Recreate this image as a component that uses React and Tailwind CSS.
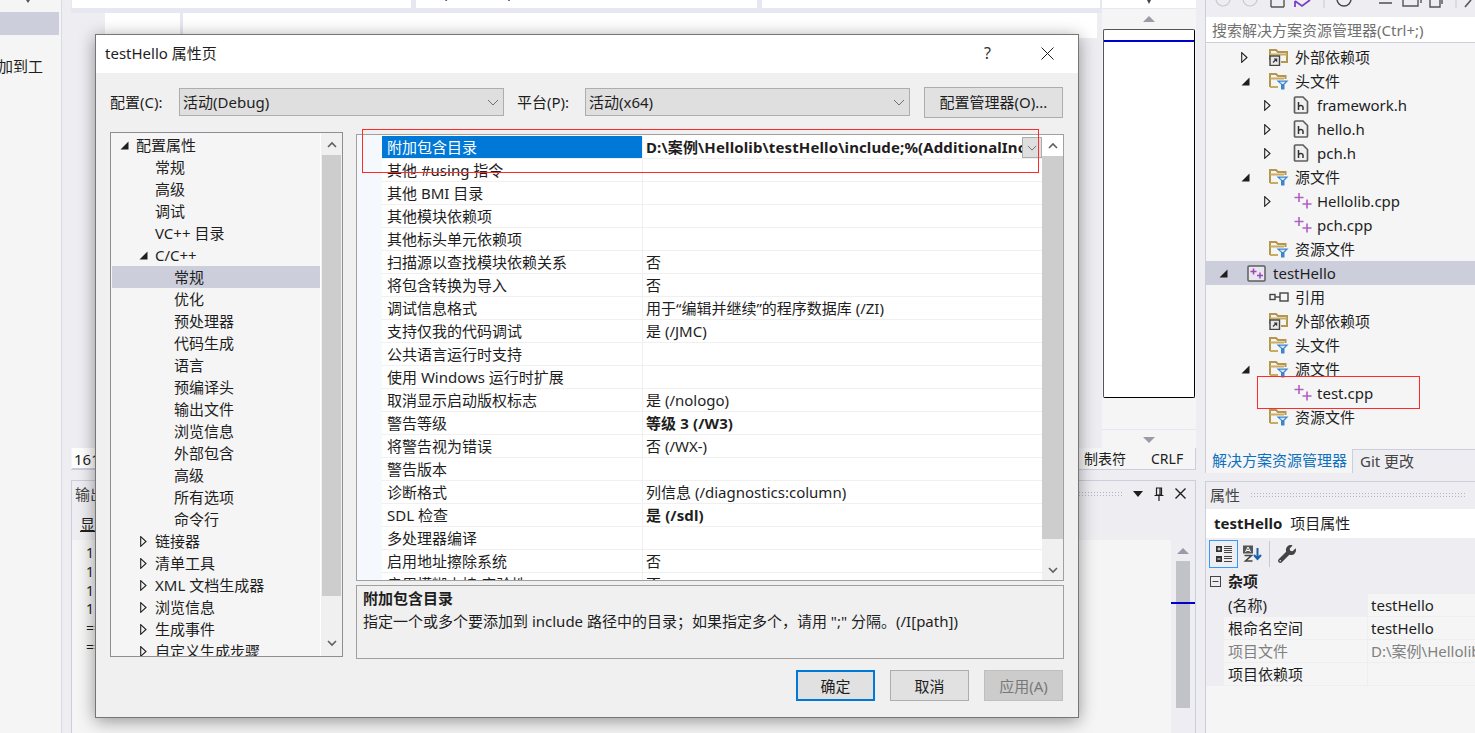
import React from 'react';
import { FaWrench } from 'react-icons/fa';

const Down = ({ c = '#5f5f5f', s = 'w-[12px] h-[7px]' }) => (
  <svg viewBox="0 0 12 7" className={s}><path d="M1 1l5 5 5-5" fill="none" stroke={c} strokeWidth="1" /></svg>
);
const ChevUp = () => (
  <svg viewBox="0 0 10 7" className="w-[10px] h-[7px]"><path d="M1 6l4-4 4 4" fill="none" stroke="#606060" strokeWidth="1.6" /></svg>
);
const ChevDown = () => (
  <svg viewBox="0 0 10 7" className="w-[10px] h-[7px]"><path d="M1 1l4 4 4-4" fill="none" stroke="#606060" strokeWidth="1.6" /></svg>
);
const Open = () => (
  <svg viewBox="0 0 9 9" className="w-[9px] h-[9px]"><polygon points="8.5,0.5 8.5,8.5 0.5,8.5" fill="#1e1e1e" /></svg>
);
const Closed = () => (
  <svg viewBox="0 0 7 11" className="w-[7px] h-[11px]"><polygon points="0.7,0.7 6,5.5 0.7,10.3" fill="none" stroke="#1e1e1e" strokeWidth="1.1" /></svg>
);
const GrayUp = () => (
  <svg viewBox="0 0 12 6" className="w-[12px] h-[6px]"><polygon points="6,0 12,6 0,6" fill="#9a9ba8" /></svg>
);
const GrayDown = () => (
  <svg viewBox="0 0 12 6" className="w-[12px] h-[6px]"><polygon points="0,0 12,0 6,6" fill="#9a9ba8" /></svg>
);

const FolderFilter = () => (
  <svg viewBox="0 0 20 18" className="w-[20px] h-[18px]">
    <path d="M1 15V2h6l2 2h7.5v3" fill="#f5f5f5" stroke="#b4964c" strokeWidth="2" />
    <path d="M1 15h8M1 6.5h14" fill="none" stroke="#c9ab62" strokeWidth="2" />
    <polygon points="7.5,8.5 19.5,8.5 15.5,12.5 15.5,17.5 12,17.5 12,12.5" fill="#3b86cf" />
    <polygon points="10.8,9.8 16.5,9.8 14.3,12 13,12" fill="#d9e9f7" />
  </svg>
);
const FolderLink = () => (
  <svg viewBox="0 0 20 18" className="w-[20px] h-[18px]">
    <path d="M1 12V2h6l2 2h9v10h-6" fill="#f5f5f5" stroke="#b4964c" strokeWidth="2" />
    <path d="M1 6.5h17" fill="none" stroke="#c9ab62" strokeWidth="2" />
    <rect x="1" y="8" width="9.5" height="9.5" fill="#e8e8e8" stroke="#444" strokeWidth="1.4" />
    <path d="M4 14.5l3.5-3.5M5 11h2.7v2.7" fill="none" stroke="#333" strokeWidth="1.1" />
  </svg>
);
const HFile = () => (
  <svg viewBox="0 0 16 18" className="w-[16px] h-[18px]">
    <path d="M1.5 2a1 1 0 0 1 1-1H10l4.5 4.5V16a1 1 0 0 1-1 1h-11a1 1 0 0 1-1-1z" fill="#f0f0f0" stroke="#5e5e5e" strokeWidth="1.7" />
    <path d="M5.5 6v8M5.5 10.5c1-1.4 4.5-1.6 4.5.6V14" fill="none" stroke="#333" strokeWidth="1.5" />
  </svg>
);
const Plus = () => (
  <svg viewBox="0 0 20 18" className="w-[20px] h-[18px]">
    <path d="M6 1v9M1.5 5.5h9M14 7.5v9M9.5 12h9" fill="none" stroke="#b05fc6" strokeWidth="1.6" />
  </svg>
);
const Project = () => (
  <svg viewBox="0 0 19 17" className="w-[19px] h-[17px]">
    <rect x="1" y="1" width="17" height="15" rx="1" fill="#e8e6ee" stroke="#5e5e5e" strokeWidth="1.5" />
    <path d="M6.5 3.5v6M3.5 6.5h6M13 7.5v6M10 10.5h6" fill="none" stroke="#a045b8" strokeWidth="1.5" />
  </svg>
);
const Ref = () => (
  <svg viewBox="0 0 20 10" className="w-[20px] h-[10px]">
    <rect x="1" y="2.5" width="5" height="5" fill="none" stroke="#444" strokeWidth="1.4" />
    <path d="M6 5h5" stroke="#444" strokeWidth="1.4" />
    <rect x="11" y="1" width="8" height="8" fill="none" stroke="#444" strokeWidth="1.4" />
  </svg>
);

const dlgTree = [
  ['配置属性', 'open', 'pl-[8px]', false],
  ['常规', 'none', 'pl-[43px]', false],
  ['高级', 'none', 'pl-[43px]', false],
  ['调试', 'none', 'pl-[43px]', false],
  ['VC++ 目录', 'none', 'pl-[43px]', false],
  ['C/C++', 'open', 'pl-[27px]', false],
  ['常规', 'none', 'pl-[62px]', true],
  ['优化', 'none', 'pl-[62px]', false],
  ['预处理器', 'none', 'pl-[62px]', false],
  ['代码生成', 'none', 'pl-[62px]', false],
  ['语言', 'none', 'pl-[62px]', false],
  ['预编译头', 'none', 'pl-[62px]', false],
  ['输出文件', 'none', 'pl-[62px]', false],
  ['浏览信息', 'none', 'pl-[62px]', false],
  ['外部包含', 'none', 'pl-[62px]', false],
  ['高级', 'none', 'pl-[62px]', false],
  ['所有选项', 'none', 'pl-[62px]', false],
  ['命令行', 'none', 'pl-[62px]', false],
  ['链接器', 'closed', 'pl-[28px]', false],
  ['清单工具', 'closed', 'pl-[28px]', false],
  ['XML 文档生成器', 'closed', 'pl-[28px]', false],
  ['浏览信息', 'closed', 'pl-[28px]', false],
  ['生成事件', 'closed', 'pl-[28px]', false],
  ['自定义生成步骤', 'closed', 'pl-[28px]', false],
];

const props = [
  ['附加包含目录', 'D:\\案例\\Hellolib\\testHello\\include;%(AdditionalIncludeDirectories)', true],
  ['其他 #using 指令', ''],
  ['其他 BMI 目录', ''],
  ['其他模块依赖项', ''],
  ['其他标头单元依赖项', ''],
  ['扫描源以查找模块依赖关系', '否'],
  ['将包含转换为导入', '否'],
  ['调试信息格式', '用于“编辑并继续”的程序数据库 (/ZI)'],
  ['支持仅我的代码调试', '是 (/JMC)'],
  ['公共语言运行时支持', ''],
  ['使用 Windows 运行时扩展', ''],
  ['取消显示启动版权标志', '是 (/nologo)'],
  ['警告等级', '等级 3 (/W3)', true],
  ['将警告视为错误', '否 (/WX-)'],
  ['警告版本', ''],
  ['诊断格式', '列信息 (/diagnostics:column)'],
  ['SDL 检查', '是 (/sdl)', true],
  ['多处理器编译', ''],
  ['启用地址擦除系统', '否'],
  ['启用模糊支持(实验性)', '否'],
];

const slnRows = [
  ['外部依赖项', 'closed', 'folderlink', 'l1'],
  ['头文件', 'open', 'filter', 'l1'],
  ['framework.h', 'closed', 'h', 'l2'],
  ['hello.h', 'closed', 'h', 'l2'],
  ['pch.h', 'closed', 'h', 'l2'],
  ['源文件', 'open', 'filter', 'l1'],
  ['Hellolib.cpp', 'closed', 'plus', 'l2'],
  ['pch.cpp', 'none', 'plus', 'l2'],
  ['资源文件', 'none', 'filter', 'l1'],
  ['testHello', 'open', 'project', 'l0'],
  ['引用', 'none', 'ref', 'l1'],
  ['外部依赖项', 'none', 'folderlink', 'l1'],
  ['头文件', 'none', 'filter', 'l1'],
  ['源文件', 'open', 'filter', 'l1'],
  ['test.cpp', 'none', 'plus', 'l2'],
  ['资源文件', 'none', 'filter', 'l1'],
];

const icons = {
  folderlink: <FolderLink />, filter: <FolderFilter />, h: <HFile />, plus: <Plus />, project: <Project />, ref: <Ref />,
};

function SlnRow({ r }) {
  const [text, arrow, icon, lvl] = r;
  const pad = lvl === 'l0' ? 'pl-[13px]' : lvl === 'l1' ? 'pl-[35px]' : 'pl-[58px]';
  const gap = lvl === 'l2' ? 'w-[29px]' : 'w-[28px]';
  const iconW = lvl === 'l2' ? 'w-[24px]' : 'w-[26px]';
  return (
    <div className={`flex items-center h-[24px] ${pad} ${lvl === 'l0' ? 'bg-[#cccedb]' : ''}`}>
      <span className={`${gap} flex items-center shrink-0`}>
        {arrow === 'open' ? <Open /> : arrow === 'closed' ? <Closed /> : null}
      </span>
      <span className={`${iconW} flex items-center shrink-0`}>{icons[icon]}</span>
      <span className="whitespace-nowrap">{text}</span>
    </div>
  );
}

function Select({ w, text }) {
  return (
    <div className={`${w} h-[28px] bg-[#dfdfdf] border border-[#adadad] flex items-center justify-between pl-[3px] pr-[4px]`}>
      <span>{text}</span>
      <Down c="#707070" />
    </div>
  );
}

function Btn({ w, children, cls }) {
  return <div className={`${w} flex items-center justify-center ${cls}`}>{children}</div>;
}

function Grip({ cls }) {
  return <div className={`h-[5px] bg-[radial-gradient(#b4b5c0_0.8px,transparent_0.9px)] bg-[length:3px_3px] ${cls}`} />;
}

export default function App() {
  return (
    <div
      className="relative w-[1475px] h-[733px] overflow-hidden flex bg-[#eeeef2] text-[15px] leading-[22px] text-[#1e1e1e]"
      style={{ fontFamily: '"Noto Sans", "Noto Sans CJK SC", sans-serif' }}
    >
      {/* left tool strip */}
      <div className="w-[62px] shrink-0 bg-[#f5f5f5] border-r border-[#d9dae6] overflow-hidden">
        <div className="h-[12px] pl-[24px]">
          <svg viewBox="0 0 8 3" className="w-[8px] h-[3px]"><polygon points="2,0 6,0 4,3" fill="#555" /></svg>
        </div>
        <div className="h-[23px] w-[59px] bg-[#cccedb]" />
        <div className="mt-[20px] h-[22px] -ml-[17px] whitespace-nowrap">添加到工</div>
      </div>
      <div className="w-[9px] shrink-0" />

      {/* centre */}
      <div className="w-[1125px] shrink-0 flex flex-col">
        <div className="h-[449px] flex bg-[#e6e7f0]">
          <div className="w-[1031px] flex flex-col">
            <div className="h-[8px] flex gap-[5px] pl-[1px]">
              <div className="w-[339px] bg-white overflow-hidden"><div className="-mt-[19px] pl-[25px] whitespace-nowrap">testHello</div></div>
              <div className="w-[341px] bg-white overflow-hidden"><div className="-mt-[19px] pl-[27px] whitespace-nowrap">(全局范围)</div></div>
              <div className="w-[338px] bg-white" />
            </div>
            <div className="h-[5px]" />
            <div className="flex-1 flex bg-[#eeeef2]">
              <div className="w-[34px]" />
              <div className="w-[75px] bg-white" />
              <div className="w-[3px] bg-[#e6e7f0]" />
              <div className="w-[914px] h-[25px] mb-auto bg-white" />
            </div>
          </div>
          <div className="w-[94px] flex flex-col items-center bg-[#f5f5f5]">
            <div className="w-full h-[9px] bg-white border-b border-[#e6e7f0] flex justify-center">
              <svg viewBox="0 0 8 4" className="w-[8px] h-[4px]"><polygon points="2,0 6,0 4,4" fill="#444" /></svg>
            </div>
            <div className="h-[20px] flex items-center"><GrayUp /></div>
            <div className="w-[92px] h-[370px] bg-white border border-[#555] border-r-black border-b-black rounded-[2px]">
              <div className="mt-[10px] h-[2px] bg-[#0000cd]" />
            </div>
            <div className="h-[31px]" />
            <div className="w-full h-[20px] flex items-center justify-center border-t border-[#e6e7f0]"><GrayDown /></div>
          </div>
        </div>
        {/* status */}
        <div className="h-[22px] flex justify-between bg-[#f5f5f5] border-b border-r border-[#cccedb] -mt-[1px] text-[14px]">
          <div className="ml-[1px] h-[21px] w-[40px] pl-[2px] bg-white border-b border-[#cccedb] text-[15px]">161</div>
          <div className="flex">
            <span className="w-[67px]">制表符</span>
            <span className="w-[44px]">CRLF</span>
          </div>
        </div>
        <div className="h-[10px]" />
        {/* output */}
        <div className="flex-1 flex flex-col border border-[#cccedb] border-b-0">
          <div className="h-[29px] flex items-center pl-[3px] pr-[9px] pb-[4px] gap-[10px]">
            <span className="text-[#444]">输出</span>
            <Grip cls="flex-1" />
            <div className="flex items-center gap-[11px]">
              <svg viewBox="0 0 10 6" className="w-[10px] h-[6px]"><polygon points="0,0 10,0 5,6" fill="#1e1e1e" /></svg>
              <svg viewBox="0 0 10 14" className="w-[10px] h-[14px]"><path d="M2.5 1h5v7h-5zM0.5 8.5h9M5 9v5M6 1.5v6" fill="none" stroke="#1e1e1e" strokeWidth="1.2" /></svg>
              <svg viewBox="0 0 11 11" className="w-[11px] h-[11px]"><path d="M0.5 0.5l10 10M10.5 0.5l-10 10" stroke="#1e1e1e" strokeWidth="1.4" /></svg>
            </div>
          </div>
          <div className="h-[30px] pl-[8px] pb-[3px] flex items-center"><span className="underline">显</span><span>示输出来源(S):</span></div>
          <div className="flex-1 flex">
            <div className="flex-1 bg-[#f5f5f5] pl-[14px] text-[14px] leading-[18.8px] pt-[4px]">
              <div>1</div>
              <div>1</div>
              <div>1</div>
              <div>1</div>
              <div>==</div>
              <div>==</div>
            </div>
            <div className="w-[24px] flex flex-col items-center pt-[8px] relative">
              <GrayUp />
              <div className="mt-[7px] w-[14px] h-[147px] bg-[#c2c3c9]" />
              <div className="absolute left-0 right-0 top-[62px] h-[2px] bg-[#0000cd]" />
            </div>
          </div>
        </div>
      </div>
      <div className="w-[9px] shrink-0" />

      {/* right */}
      <div className="flex-1 min-w-0 flex flex-col">
        <div className="h-[473px] flex flex-col bg-[#f5f5f5] border-l border-[#cccedb]">
          <div className="h-[17px] bg-[#eeeef2] overflow-hidden">
            <svg viewBox="0 0 269 17" className="w-[269px] h-[17px]">
              <circle cx="17" cy="-1" r="7" fill="none" stroke="#c8c8cc" strokeWidth="1.2" />
              <circle cx="44" cy="-1" r="7" fill="none" stroke="#c8c8cc" strokeWidth="1.2" />
              <path d="M65 7V0M78 7V0M65 7h13" fill="none" stroke="#555" strokeWidth="1.4" />
              <path d="M89 1l7 5 8-6M89 7V1" fill="none" stroke="#7b3fc4" strokeWidth="1.8" />
              <path d="M118 0v8" stroke="#c8c8d0" />
              <circle cx="138" cy="-1" r="7" fill="none" stroke="#444" strokeWidth="1.4" />
              <path d="M173 3h13" stroke="#444" strokeWidth="1.4" />
              <path d="M197 0v6h15V0M215 0v3" fill="none" stroke="#555" strokeWidth="1.4" />
              <path d="M224 0v7h10V0M236 0v4" fill="none" stroke="#555" strokeWidth="1.4" />
              <path d="M250 0v8" stroke="#c8c8d0" />
              <path d="M259 7l6-7" stroke="#555" strokeWidth="1.6" />
            </svg>
          </div>
          <div className="h-[26px] bg-white border-b border-[#cccedb] pl-[6px] flex items-center text-[#717171]">搜索解决方案资源管理器(Ctrl+;)</div>
          <div className="h-[2px]" />
          <div className="flex-1 flex flex-col">
            {slnRows.map((r, i) => <SlnRow key={i} r={r} />)}
          </div>
          <div className="h-[24px] flex bg-[#eeeef2]">
            <div className="w-[147px] bg-[#f5f5f5] pl-[6px] text-[#0e70c0] border-r border-[#cccedb] shrink-0">解决方案资源管理器</div>
            <div className="flex-1 pl-[7px] text-[#444] border-t border-[#cccedb]">Git 更改</div>
          </div>
        </div>
        <div className="h-[8px]" />
        {/* properties */}
        <div className="flex-1 flex flex-col border-l border-t border-[#cccedb] bg-[#f5f5f5]">
          <div className="h-[27px] flex items-center pl-[4px] pb-[2px] bg-[#eeeef2] gap-[10px]">
            <span className="text-[#444]">属性</span>
            <Grip cls="w-[216px]" />
          </div>
          <div className="h-[29px] bg-white flex items-center pl-[8px] pb-[2px] gap-[8px]">
            <span className="font-bold">testHello</span>
            <span>项目属性</span>
          </div>
          <div className="h-[32px] bg-[#eeeef2] flex items-center pl-[3px]">
            <div className="w-[29px] h-[28px] border border-[#3399ff] flex items-center justify-center">
              <svg viewBox="0 0 18 18" className="w-[18px] h-[18px]">
                <rect x="1" y="1" width="6" height="6" fill="#333" /><rect x="1" y="11" width="6" height="6" fill="#333" />
                <path d="M2.5 4h3M4 2.5v3M2.5 14h3" stroke="#fff" strokeWidth="1" />
                <path d="M9 1.5h8M9 3.5h8M9 5.5h8M9 7.5h8M9 11.5h8M9 13.5h8M9 16.5h8" stroke="#444" strokeWidth="1" />
              </svg>
            </div>
            <div className="w-[28px] flex items-center justify-center">
              <svg viewBox="0 0 20 18" className="w-[20px] h-[18px]">
                <rect x="1" y="0.5" width="10" height="8" fill="#555" />
                <path d="M3.5 7l2.5-5 2.5 5M4.5 5.5h3" fill="none" stroke="#fff" strokeWidth="1" />
                <path d="M2.5 10.5h7l-6 5.5h7" fill="none" stroke="#444" strokeWidth="1.6" />
                <path d="M15.5 3v11M12 10l3.5 4 3.5-4" fill="none" stroke="#1a5fa8" strokeWidth="2" />
              </svg>
            </div>
            <div className="w-px h-[26px] bg-[#c8c9d2] ml-[3px] mr-[8px]" />
            <FaWrench className="w-[18px] h-[18px] text-[#444]" />
          </div>
          <div className="flex-1 flex flex-col bg-[#eeeef2]">
            <div className="h-[24px] flex items-center pl-[4px] pb-[2px] gap-[7px]">
              <svg viewBox="0 0 11 11" className="w-[11px] h-[11px]"><rect x="0.5" y="0.5" width="10" height="10" fill="none" stroke="#444" /><path d="M2.5 5.5h6" stroke="#444" /></svg>
              <span className="font-bold">杂项</span>
            </div>
            {[['(名称)', 'testHello', 'text-[#1e1e1e]'], ['根命名空间', 'testHello', 'text-[#1e1e1e]'], ['项目文件', 'D:\\案例\\Hellolib\\testHello\\testHello.vcxproj', 'text-[#808080]'], ['项目依赖项', '', 'text-[#1e1e1e]']].map((r, i) => (
              <div key={i} className={`h-[23px] flex ${r[2]}`}>
                <div className="w-[18px] shrink-0" />
                <div className={`w-[144px] shrink-0 pl-[4px] border-r border-b border-[#eeeef2] ${i === 0 ? '' : 'bg-[#f5f5f5]'}`}>{r[0]}</div>
                <div className="flex-1 min-w-0 pl-[3px] whitespace-nowrap overflow-hidden bg-[#f5f5f5] border-b border-[#eeeef2]">{r[1]}</div>
              </div>
            ))}
            <div className="flex-1 bg-[#f5f5f5]" />
          </div>
        </div>
      </div>

      {/* dialog */}
      <div className="absolute left-[95px] top-[34px] w-[984px] h-[684px] bg-[#f0f0f0] border border-[#767676] shadow-[0_3px_16px_rgba(0,0,0,0.4)] flex flex-col">
        <div className="h-[38px] shrink-0 bg-white flex items-center pl-[9px] pb-[2px]">
          <span className="flex-1">testHello 属性页</span>
          <span className="w-[14px] text-[#333] text-[16px]">?</span>
          <svg viewBox="0 0 13 13" className="w-[13px] h-[13px] ml-[43px] mr-[24px]"><path d="M0.5 0.5l12 12M12.5 0.5l-12 12" stroke="#1e1e1e" strokeWidth="1" /></svg>
        </div>
        <div className="h-[34px] mt-[12px] shrink-0 flex items-center pl-[14px] whitespace-nowrap">
          <span className="w-[69px]">配置(C):</span>
          <Select w="w-[325px]" text="活动(Debug)" />
          <span className="ml-[13px] w-[68px]">平台(P):</span>
          <Select w="w-[325px]" text="活动(x64)" />
          <div className="ml-[14px] w-[139px] h-[31px] bg-[#e1e1e1] border border-[#adadad] flex items-center justify-center">配置管理器(O)...</div>
        </div>
        <div className="flex-1 min-h-0 flex pl-[14px] pr-[15px] mt-[13px]">
          {/* tree */}
          <div className="w-[233px] h-[525px] bg-[#f5f5f5] border border-[#8c8e94] flex overflow-hidden shrink-0">
            <div className="w-[209px] h-[523px] overflow-hidden pt-px pl-px">
              {dlgTree.map((r, i) => (
                <div key={i} className={`h-[22px] flex items-center whitespace-nowrap ${r[2]} ${r[3] ? 'bg-[#cccedb]' : ''}`}>
                  {r[1] === 'open' ? <span className="w-[16px] flex items-center"><Open /></span> : null}
                  {r[1] === 'closed' ? <span className="w-[15px] flex items-center"><Closed /></span> : null}
                  <span>{r[0]}</span>
                </div>
              ))}
            </div>
            <div className="w-[22px] flex flex-col items-center bg-[#f0f0f0] border-l border-white">
              <div className="h-[22px] flex items-center justify-center"><ChevUp /></div>
              <div className="w-[19px] h-[441px] bg-[#cdcdcd]" />
              <div className="flex-1 flex items-end justify-center pb-[9px]"><ChevDown /></div>
            </div>
          </div>
          <div className="w-[13px] shrink-0" />
          <div className="w-[708px] flex flex-col shrink-0">
            {/* grid */}
            <div className="h-[447px] mt-[2px] bg-white border border-[#a0a0a0] flex overflow-hidden shrink-0">
              <div className="w-[25px] shrink-0 bg-[#f5f8fd]" />
              <div className="w-[660px] shrink-0 overflow-hidden pt-px">
                {props.map((p, i) => (
                  <div key={i} className="h-[23px] flex border-b border-[#f0f0f0] whitespace-nowrap">
                    <div className={`w-[260px] shrink-0 pl-[5px] ${i === 0 ? 'bg-[#0078d7] text-white' : ''}`}>{p[0]}</div>
                    <div className={`flex-1 min-w-0 flex border-l border-[#f0f0f0] pl-[3px] overflow-hidden ${p[2] ? 'font-bold tracking-[0.12px]' : ''}`}>
                      <span className="flex-1 min-w-0 overflow-hidden">{p[1]}</span>
                      {i === 0 ? (
                        <span className="w-[20px] h-[21px] mt-px shrink-0 bg-[#dfdfdf] border border-[#adadad] flex items-center justify-center"><Down c="#606060" s="w-[10px] h-[6px]" /></span>
                      ) : null}
                    </div>
                  </div>
                ))}
              </div>
              <div className="flex-1 flex flex-col items-center bg-[#f0f0f0]">
                <div className="h-[21px] w-full bg-white flex items-center justify-center"><ChevUp /></div>
                <div className="w-full h-[383px] bg-[#cdcdcd]" />
                <div className="flex-1 flex items-end justify-center pb-[6px]"><ChevDown /></div>
              </div>
            </div>
            {/* description */}
            <div className="h-[74px] mt-[4px] border border-[#a0a0a0] pl-[6px] pt-px shrink-0 leading-[23px] whitespace-nowrap">
              <div className="font-bold">附加包含目录</div>
              <div>指定一个或多个要添加到 include 路径中的目录；如果指定多个，请用 ";" 分隔。(/I[path])</div>
            </div>
          </div>
        </div>
        <div className="h-[47px] shrink-0 flex items-start justify-end gap-[15px] pr-[15px]">
          <Btn w="w-[79px] h-[31px]" cls="bg-[#e1e1e1] border-2 border-[#0078d7]">确定</Btn>
          <Btn w="w-[79px] h-[31px]" cls="bg-[#e1e1e1] border border-[#adadad]">取消</Btn>
          <Btn w="w-[79px] h-[31px]" cls="bg-[#cccccc] border border-[#bfbfbf] text-[#787878]">应用(A)</Btn>
        </div>
      </div>

      {/* annotations */}
      <div className="absolute left-[362px] top-[129px] w-[677px] h-[44px] border border-[#ff2a2a]" />
      <div className="absolute left-[1257px] top-[376px] w-[163px] h-[33px] border border-[#ff2a2a]" />
    </div>
  );
}
